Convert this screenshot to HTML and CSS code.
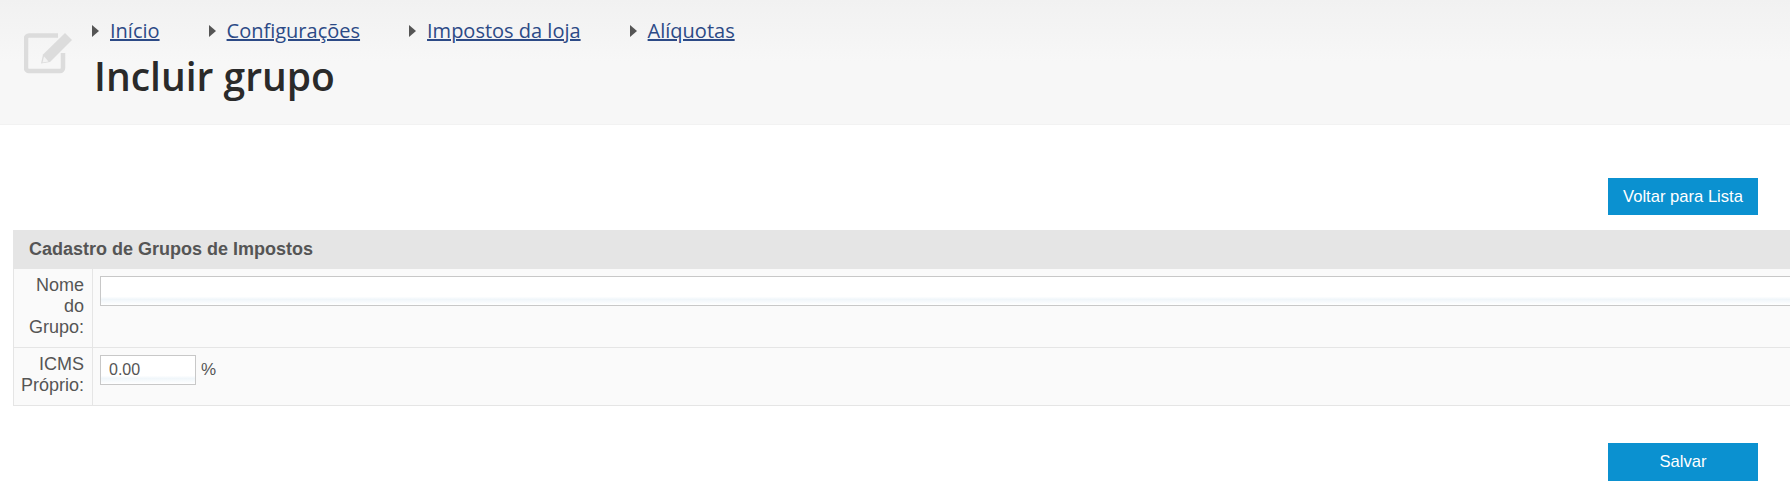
FILE: index.html
```html
<!DOCTYPE html>
<html lang="pt-BR">

<head>
  <title>Incluir grupo</title>
  <meta charset="UTF-8">
  <meta name="viewport" content="width=device-width, initial-scale=1">
  <link rel="stylesheet" href="styles.css">
</head>

<body>
  <div class="header">
    <svg class="header-icon" width="50" height="50" viewBox="0 0 50 50">
      <path d="M34 5.500H5a3 3 0 0 0-3 3V38a3 3 0 0 0 3 3H36a3 3 0 0 0 3-3V23" fill="none" stroke="#dcdcdc" stroke-width="4.500"/>
      <path d="M41 3l7 7-22 22-9 1.500 2-9z" fill="#dcdcdc"/>
      <path d="M18.500 32.500l1.500-6 1.500 1.500 3 3.500z" fill="#f3f3f3"/>
    </svg>
    <div class="header-text">
      <ul class="breadcrumb">
        <li><a href="#">Início</a></li>
        <li><a href="#">Configurações</a></li>
        <li><a href="#">Impostos da loja</a></li>
        <li><a href="#">Alíquotas</a></li>
      </ul>
      <h1>Incluir grupo</h1>
    </div>
  </div>

  <div class="main">
    <div class="actions actions-top">
      <a class="btn" href="#">Voltar para Lista</a>
    </div>

    <div class="panel">
      <h2 class="panel-title">Cadastro de Grupos de Impostos</h2>
      <div class="row row-name">
        <label class="row-label" for="nome">Nome do Grupo:</label>
        <div class="row-field">
          <input class="input input-wide" type="text" id="nome">
        </div>
      </div>
      <div class="row row-icms">
        <label class="row-label" for="icms">ICMS Próprio:</label>
        <div class="row-field">
          <input class="input input-small" type="text" id="icms" value="0.00">
          <span class="unit">%</span>
        </div>
      </div>
    </div>

    <div class="actions actions-bottom">
      <a class="btn btn-tall" href="#">Salvar</a>
    </div>
  </div>
</body>

</html>
```

FILE: styles.css
```css
* {
  box-sizing: border-box;
}

html,
body {
  overflow: hidden;
}

body {
  font-family: "Liberation Sans", Arial, sans-serif;
  margin: 0;
  background-color: #fff;
  color: #555;
}

/* Header with breadcrumb and title */
.header {
  display: flex;
  height: 125px;
  padding-left: 24px;
  background: linear-gradient(#f1f1f1, #f7f7f7 50%);
  border-bottom: 1px solid #f2f2f2;
}

.header-icon {
  flex: none;
  margin-top: 30px;
}

.header-text {
  margin-left: 18px;
}

.breadcrumb {
  display: flex;
  gap: 49px;
  list-style: none;
  margin: 0;
  padding: 17px 0 0;
  font-family: "Open Sans", sans-serif;
  font-size: 20px;
  line-height: 27px;
}

.breadcrumb li {
  display: flex;
  align-items: center;
  gap: 11px;
}

.breadcrumb li:before {
  content: "";
  border-left: 7px solid #555;
  border-top: 6px solid transparent;
  border-bottom: 6px solid transparent;
}

.breadcrumb a {
  color: #2c4a86;
}

h1 {
  margin: 5px 0 0 2px;
  font-family: "Open Sans", sans-serif;
  font-size: 39px;
  font-weight: 600;
  line-height: 54px;
  color: #2a2a2a;
}

/* Main column */
.main {
  padding-left: 13px;
  width: 1900px;
}

.actions {
  width: 1745px;
  display: flex;
  justify-content: flex-end;
}

.actions-top {
  padding-top: 53px;
}

.actions-bottom {
  padding-top: 37px;
}

.btn {
  display: block;
  width: 150px;
  height: 37px;
  background-color: #0b91d0;
  color: #fff;
  font-size: 16.6px;
  line-height: 37px;
  text-align: center;
  text-decoration: none;
}

.btn-tall {
  height: 38px;
  line-height: 38px;
}

/* Form panel */
.panel {
  margin-top: 15px;
}

.panel-title {
  margin: 0;
  height: 39px;
  padding-left: 16px;
  background-color: #e5e5e5;
  font-size: 18px;
  font-weight: bold;
  line-height: 38px;
  color: #555;
}

.row {
  display: flex;
  background-color: #fafafa;
  border-left: 1px solid #e5e5e5;
  border-bottom: 1px solid #e5e5e5;
}

.row-name {
  height: 79px;
}

.row-icms {
  height: 58px;
}

.row-label {
  flex: none;
  width: 79px;
  padding: 6px 8px 0 6px;
  border-right: 1px solid #e5e5e5;
  font-size: 18px;
  line-height: 21px;
  text-align: right;
  color: #555;
}

.row-field {
  flex: 1;
  display: flex;
  align-items: flex-start;
  padding: 7px 0 0 7px;
}

.input {
  height: 30px;
  padding: 0 8px;
  border: 1px solid #c8c8c8;
  background: linear-gradient(#fff 70%, #f0f6fa 80%, #fff);
  font-family: "Liberation Sans", Arial, sans-serif;
  font-size: 16px;
  color: #555;
}

.input-wide {
  width: 1780px;
}

.input-small {
  width: 96px;
}

.unit {
  margin-left: 5px;
  font-size: 17px;
  line-height: 30px;
}
```
